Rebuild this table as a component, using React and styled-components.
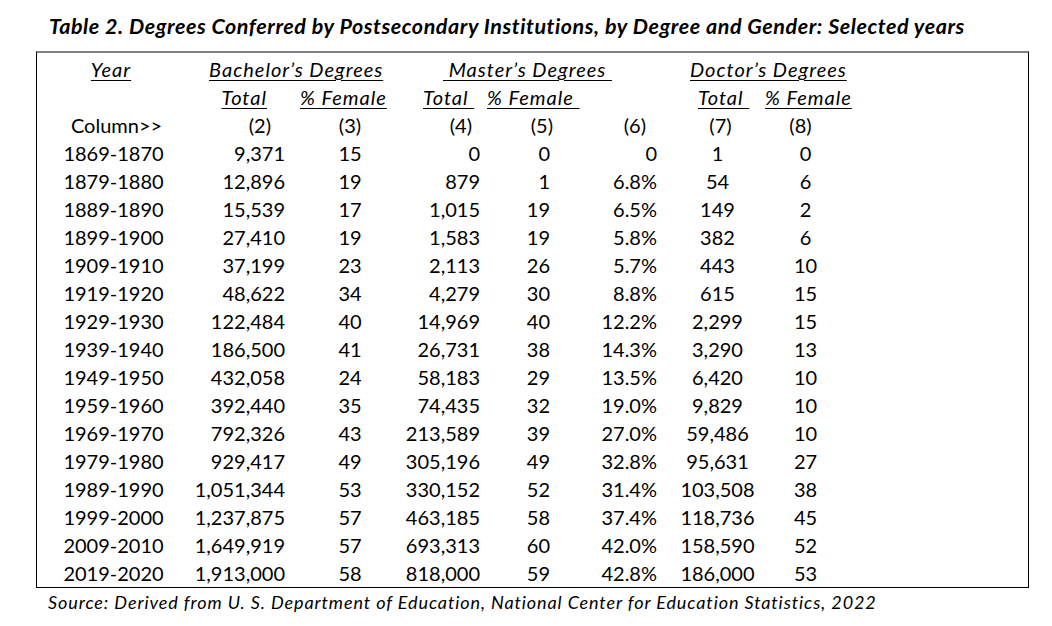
import React from 'react';
import styled, { createGlobalStyle } from 'styled-components';

const GlobalStyle = createGlobalStyle`
  body {
    margin: 0;
    background: #ffffff;
    color: #000000;
    font-family: Lato, "Liberation Sans", sans-serif;
  }
`;

const rows = [
  ['1869-1870', '9,371', '15', '0', '0', '0', '1', '0'],
  ['1879-1880', '12,896', '19', '879', '1', '6.8%', '54', '6'],
  ['1889-1890', '15,539', '17', '1,015', '19', '6.5%', '149', '2'],
  ['1899-1900', '27,410', '19', '1,583', '19', '5.8%', '382', '6'],
  ['1909-1910', '37,199', '23', '2,113', '26', '5.7%', '443', '10'],
  ['1919-1920', '48,622', '34', '4,279', '30', '8.8%', '615', '15'],
  ['1929-1930', '122,484', '40', '14,969', '40', '12.2%', '2,299', '15'],
  ['1939-1940', '186,500', '41', '26,731', '38', '14.3%', '3,290', '13'],
  ['1949-1950', '432,058', '24', '58,183', '29', '13.5%', '6,420', '10'],
  ['1959-1960', '392,440', '35', '74,435', '32', '19.0%', '9,829', '10'],
  ['1969-1970', '792,326', '43', '213,589', '39', '27.0%', '59,486', '10'],
  ['1979-1980', '929,417', '49', '305,196', '49', '32.8%', '95,631', '27'],
  ['1989-1990', '1,051,344', '53', '330,152', '52', '31.4%', '103,508', '38'],
  ['1999-2000', '1,237,875', '57', '463,185', '58', '37.4%', '118,736', '45'],
  ['2009-2010', '1,649,919', '57', '693,313', '60', '42.0%', '158,590', '52'],
  ['2019-2020', '1,913,000', '58', '818,000', '59', '42.8%', '186,000', '53'],
];

// how each data column sits in its grid track
const dataCols = [
  { align: 'center', pl: 0, pr: 0 },
  { align: 'right', pl: 0, pr: 15 },
  { align: 'center', pl: 0, pr: 0 },
  { align: 'right', pl: 0, pr: 5 },
  { align: 'right', pl: 0, pr: 25 },
  { align: 'right', pl: 0, pr: 13 },
  { align: 'center', pl: 0, pr: 0 },
  { align: 'center', pl: 0, pr: 4 },
];

const headings = [
  { row: 1, col: '1', align: 'center', pr: 5, text: 'Year' },
  { row: 1, col: '2 / span 2', align: 'left', pl: 19, text: 'Bachelor’s Degrees' },
  { row: 1, col: '4 / span 3', align: 'left', pl: 43, text: '\u00a0Master’s Degrees\u00a0' },
  { row: 1, col: '7 / span 2', align: 'left', pl: 20, text: 'Doctor’s Degrees' },
  { row: 2, col: '2', align: 'right', pr: 33, text: 'Total' },
  { row: 2, col: '3', align: 'left', pl: 0, text: '% Female' },
  { row: 2, col: '4', align: 'left', pl: 23, text: 'Total\u00a0' },
  { row: 2, col: '5', align: 'left', pl: 2, text: '% Female\u00a0' },
  { row: 2, col: '7', align: 'left', pl: 28, text: 'Total\u00a0' },
  { row: 2, col: '8', align: 'left', pl: 0, text: '% Female' },
];

const columnNumbers = [
  { col: '1', align: 'center', pl: 6, text: 'Column>>' },
  { col: '2', align: 'right', pr: 29, text: '(2)' },
  { col: '3', align: 'center', text: '(3)' },
  { col: '4', align: 'right', pr: 13, text: '(4)' },
  { col: '5', align: 'right', pr: 22, text: '(5)' },
  { col: '6', align: 'right', pr: 24, text: '(6)' },
  { col: '7', align: 'center', pl: 6, text: '(7)' },
  { col: '8', align: 'center', pr: 14, text: '(8)' },
];

const justify = { left: 'flex-start', center: 'center', right: 'flex-end' };

const App = () => (
  <Page>
    <GlobalStyle />
    <Title>Table 2. Degrees Conferred by Postsecondary Institutions, by Degree and Gender: Selected years</Title>
    <TableBox>
      <Grid>
        {headings.map((h, i) => (
          <HeadCell
            key={`h${i}`}
            $row={h.row}
            $col={h.col}
            $align={h.align}
            $pl={h.pl || 0}
            $pr={h.pr || 0}
          >
            <Underlined>{h.text}</Underlined>
          </HeadCell>
        ))}
        {columnNumbers.map((c, i) => (
          <Cell
            key={`c${i}`}
            $row={3}
            $col={c.col}
            $align={c.align}
            $pl={c.pl || 0}
            $pr={c.pr || 0}
          >
            {c.text}
          </Cell>
        ))}
        {rows.map((r, ri) =>
          r.map((v, ci) => (
            <Cell
              key={`${ri}-${ci}`}
              $row={ri + 4}
              $col={`${ci + 1}`}
              $align={dataCols[ci].align}
              $pl={dataCols[ci].pl}
              $pr={dataCols[ci].pr}
            >
              {v}
            </Cell>
          ))
        )}
      </Grid>
    </TableBox>
    <Source>Source: Derived from U. S. Department of Education, National Center for Education Statistics, 2022</Source>
  </Page>
);

const Page = styled.div`
  width: 1052px;
  height: 626px;
  box-sizing: border-box;
  padding-top: 12px;
  display: flex;
  flex-direction: column;
`;

const Title = styled.h1`
  margin: 0 0 10px 49px;
  font-family: Lato, "Liberation Sans", sans-serif;
  font-size: 21.5px;
  font-weight: 700;
  font-style: italic;
  letter-spacing: 0.55px;
  line-height: 29px;
  white-space: nowrap;
`;

const TableBox = styled.div`
  margin-left: 36px;
  width: 993px;
  box-sizing: border-box;
  border-top: 2px solid #808080;
  border-left: 1px solid #000;
  border-right: 1px solid #000;
  border-bottom: 1px solid #000;
  padding-top: 2px;
`;

const Grid = styled.div`
  display: grid;
  grid-template-columns: 153px 110px 100px 85px 90px 95px 95px 85px 1fr;
  grid-auto-rows: 28px;
`;

const Cell = styled.div`
  grid-row: ${p => p.$row};
  grid-column: ${p => p.$col};
  display: flex;
  align-items: center;
  justify-content: ${p => justify[p.$align]};
  padding-left: ${p => p.$pl}px;
  padding-right: ${p => p.$pr}px;
  font-size: 20px;
  line-height: 28px;
  white-space: nowrap;
  min-width: 0;
`;

const HeadCell = styled(Cell)`
  font-style: italic;
  letter-spacing: 1px;
`;

const Underlined = styled.span`
  text-decoration: underline;
  text-decoration-thickness: 1px;
  text-underline-offset: 3px;
`;

const Source = styled.p`
  margin: 2px 0 0 48px;
  font-size: 18px;
  font-style: italic;
  letter-spacing: 0.9px;
  line-height: 24px;
  white-space: nowrap;
`;

export default App;
